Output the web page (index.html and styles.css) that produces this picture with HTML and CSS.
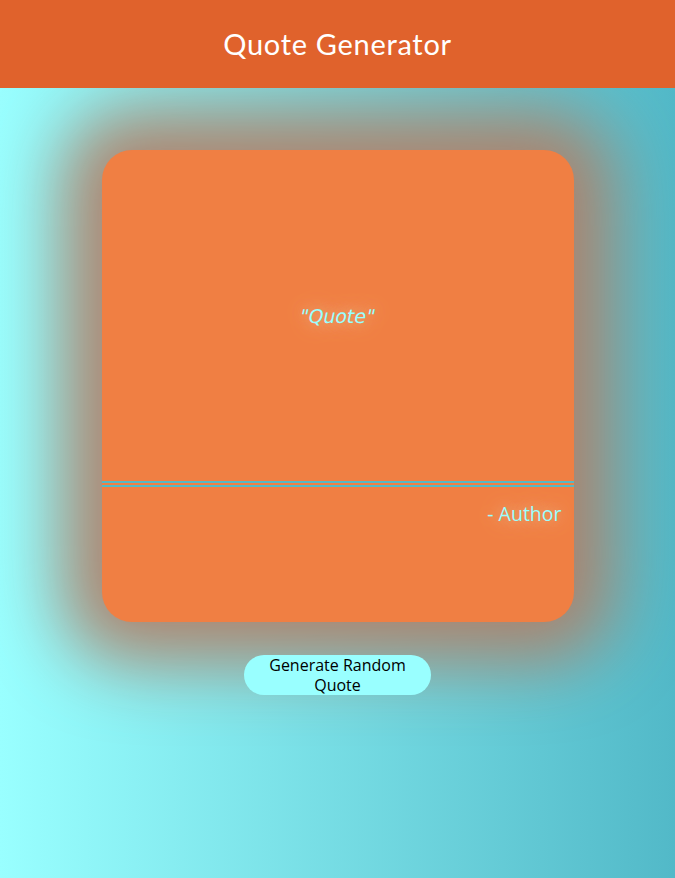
FILE: index.html
```html
<!DOCTYPE html>
<html>
<head>
<meta charset="utf-8">
<link rel="stylesheet" href="styles.css">
</head>
<body>
<header class="header"><h1 class="title">Quote Generator</h1></header>
<main class="main">
  <div class="card">
    <div class="quote-area"><p class="quote">"Quote"</p></div>
    <div class="divider"></div>
    <p class="author">- Author</p>
  </div>
  <button class="btn">Generate Random Quote</button>
</main>
</body>
</html>
```
FILE: styles.css
```css
html, body { margin: 0; padding: 0; }
body {
  min-height: 878px;
  background: linear-gradient(to right, #99ffff 0%, #52b9c8 100%);
  font-family: "Open Sans", sans-serif;
}
.header {
  position: relative;
  z-index: 1;
  height: 88px;
  background: #e0622c;
  display: flex;
  align-items: center;
  justify-content: center;
}
.title {
  margin: 0 0 2px;
  color: #fff;
  font-family: "Lato", sans-serif;
  font-weight: 400;
  font-size: 29px;
  letter-spacing: 0.7px;
}
.main {
  display: flex;
  flex-direction: column;
  align-items: center;
  padding-top: 62px;
}
.card {
  width: 472px;
  height: 472px;
  background: #f07f43;
  border-radius: 30px;
  box-shadow: 0 0 70px 40px rgba(176, 128, 104, 0.95);
  display: flex;
  flex-direction: column;
}
.quote-area {
  height: 331px;
  display: flex;
  align-items: center;
  justify-content: center;
}
.quote {
  margin: 0;
  color: #99ffff;
  font-family: "DejaVu Sans", sans-serif;
  font-size: 19px;
  transform: skewX(-12deg);
  text-shadow: 0 0 14px rgba(235, 180, 130, 1), 0 0 22px rgba(235, 180, 130, 1);
}
.divider {
  height: 2px;
  border-top: 2px solid #55b9c5;
  border-bottom: 2px solid #55b9c5;
}
.author {
  margin: 13px 12px 0 0;
  text-align: right;
  color: #99ffff;
  font-family: "Open Sans", sans-serif;
  font-size: 19.5px;
  text-shadow: 0 0 14px rgba(235, 180, 130, 1), 0 0 22px rgba(235, 180, 130, 1);
}
.btn {
  margin-top: 33px;
  width: 187px;
  height: 40px;
  border: none;
  border-radius: 20px;
  background: #99ffff;
  color: #000;
  font-family: "Open Sans", sans-serif;
  font-size: 16px;
  line-height: 20px;
  padding: 0 16px;
}
```
